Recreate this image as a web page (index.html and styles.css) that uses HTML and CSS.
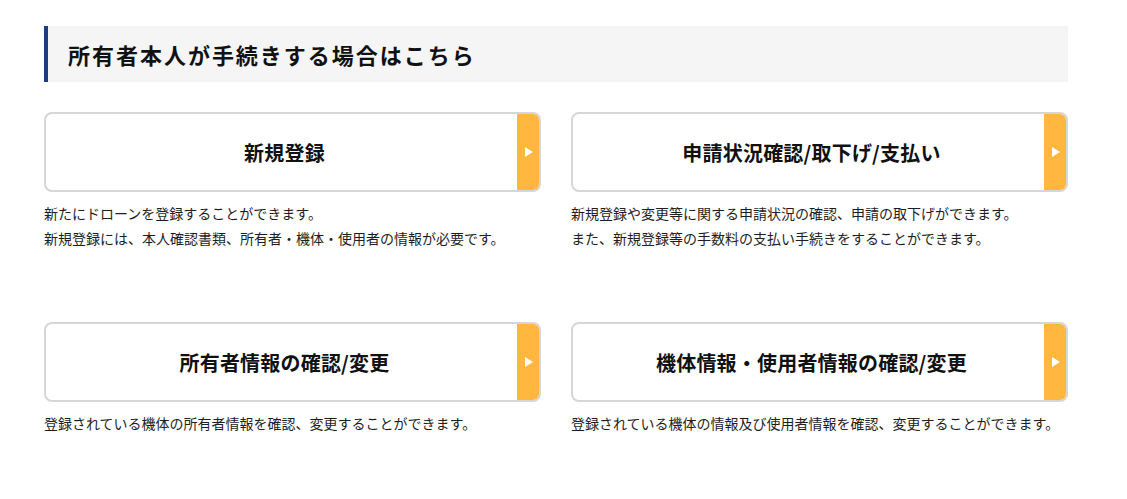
FILE: index.html
```html
<!DOCTYPE html>
<html lang="ja">
<head>
<meta charset="utf-8">
<title>所有者本人が手続きする場合はこちら</title>
<link rel="stylesheet" href="styles.css">
</head>
<body>
<div class="page">
  <h2 class="heading">所有者本人が手続きする場合はこちら</h2>
  <div class="grid">
    <div class="item">
      <a class="card" href="#"><span class="label">新規登録</span><span class="arrow"></span></a>
      <p class="desc">新たにドローンを登録することができます。<br>新規登録には、本人確認書類、所有者・機体・使用者の情報が必要です。</p>
    </div>
    <div class="item">
      <a class="card" href="#"><span class="label">申請状況確認/取下げ/支払い</span><span class="arrow"></span></a>
      <p class="desc">新規登録や変更等に関する申請状況の確認、申請の取下げができます。<br>また、新規登録等の手数料の支払い手続きをすることができます。</p>
    </div>
    <div class="item">
      <a class="card" href="#"><span class="label">所有者情報の確認/変更</span><span class="arrow"></span></a>
      <p class="desc">登録されている機体の所有者情報を確認、変更することができます。</p>
    </div>
    <div class="item">
      <a class="card" href="#"><span class="label">機体情報・使用者情報の確認/変更</span><span class="arrow"></span></a>
      <p class="desc">登録されている機体の情報及び使用者情報を確認、変更することができます。</p>
    </div>
  </div>
</div>
</body>
</html>
```
FILE: styles.css
```css
html, body {
  margin: 0;
  padding: 0;
  background: #ffffff;
}
body {
  font-family: "Noto Sans CJK JP", "Noto Sans", sans-serif;
  color: #1e1e1e;
}
.page {
  width: 1024px;
  padding: 26px 0 0 44px;
}
.heading {
  margin: 0;
  height: 56px;
  box-sizing: border-box;
  background: #f5f5f5;
  border-left: 4px solid #1b3f7d;
  padding-left: 20px;
  display: flex;
  align-items: center;
  font-size: 22px;
  font-weight: 700;
  letter-spacing: 0.09em;
  color: #111111;
}
.grid {
  margin-top: 30px;
  display: grid;
  grid-template-columns: 497px 497px;
  column-gap: 30px;
  row-gap: 70px;
}
.item {
  height: 140px;
}
.card {
  display: flex;
  height: 80px;
  box-sizing: border-box;
  border: 2px solid #d6d6d6;
  border-radius: 8px;
  overflow: hidden;
  text-decoration: none;
  color: #111111;
}
.label {
  flex: 1;
  display: flex;
  align-items: center;
  justify-content: center;
  padding-left: 6px;
  font-size: 20px;
  font-weight: 700;
  letter-spacing: 0.01em;
}
.arrow {
  width: 22px;
  background: #ffb73f;
  display: flex;
  align-items: center;
  justify-content: center;
}
.arrow::before {
  content: "";
  display: block;
  width: 0;
  height: 0;
  border-top: 5px solid transparent;
  border-bottom: 5px solid transparent;
  border-left: 8px solid #ffffff;
  margin-left: 2px;
}
.desc {
  margin: 9px 0 0;
  font-size: 14px;
  line-height: 25px;
  color: #1e1e1e;
}
```
